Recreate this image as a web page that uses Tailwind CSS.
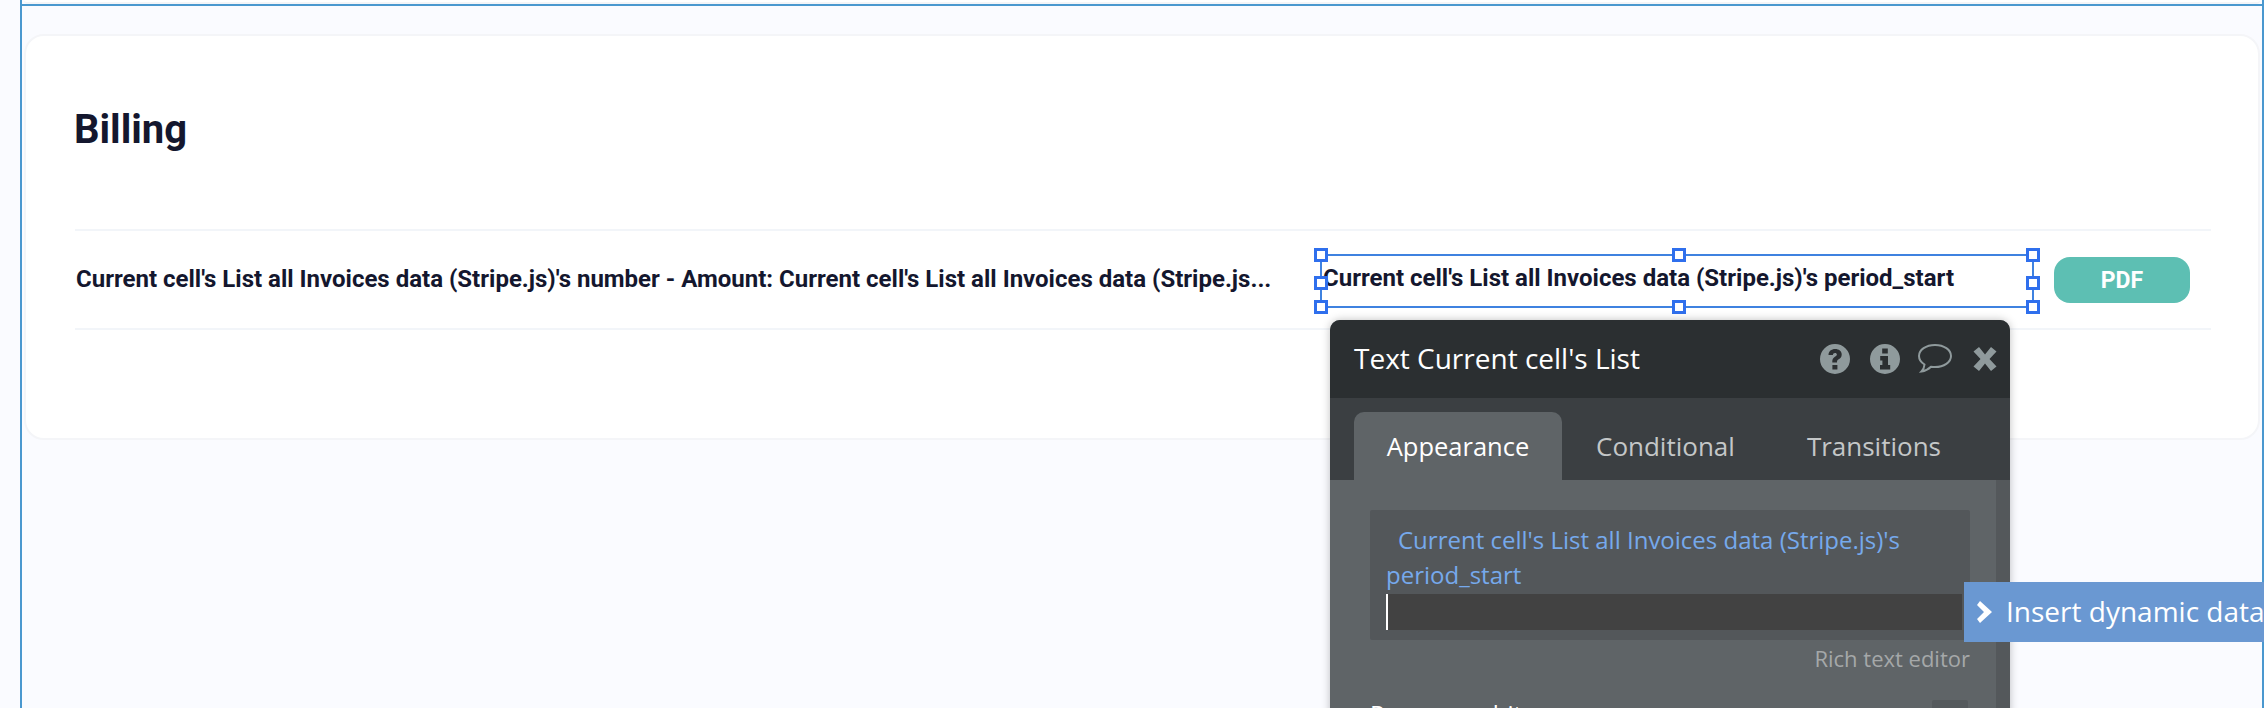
<!DOCTYPE html>
<html lang="en">
  <head>
    <meta charset="UTF-8" />
    <title>Billing</title>
    <script src="https://cdn.jsdelivr.net/npm/@tailwindcss/browser@4"></script>
  </head>
  <body class="bg-[#fafbff] overflow-hidden">
    <div class="relative w-[2264px] h-[708px] overflow-hidden font-['Roboto',sans-serif]">
      <!-- Page frame -->
      <div class="ml-[20px] h-[708px] border-l-2 border-r-2 border-[#4a98cf]">
        <!-- bottom of the card above -->
        <div class="h-[4px] ml-[2px] mr-[2px] bg-white border-b-2 border-[#f4f5f8] rounded-b-[20px]"></div>
        <div class="border-t-2 border-[#4a98cf]">
          <!-- Billing card -->
          <div class="mt-[28px] ml-[2px] mr-[2px] h-[406px] bg-white border-2 border-[#f4f5f8] rounded-[20px] pl-[49px] pr-[47px]">
            <h1 class="-ml-[1px] pt-[70px] h-[193px] text-[40px] leading-[48px] font-bold text-[#14172e]">Billing</h1>
            <div class="h-[101px] border-y-2 border-[#f2f5f9] flex items-center">
              <div class="w-[1200px] pl-[1px] pb-[2px] text-[24px] leading-[30px] font-bold text-[#14172e] truncate">Current cell's List all Invoices data (Stripe.js)'s number - Amount: Current cell's List all Invoices data (Stripe.js...</div>
              <div class="w-[48px] shrink-0"></div>
              <div class="w-[710px] shrink-0 pb-[4px] text-[24px] leading-[30px] font-bold text-[#14172e] whitespace-nowrap">Current cell's List all Invoices data (Stripe.js)'s period_start</div>
              <button class="ml-[21px] w-[136px] h-[46px] pt-[3px] rounded-[16px] bg-[#5dbfb3] text-white text-[23px] font-bold">PDF</button>
            </div>
          </div>
        </div>
      </div>

      <!-- Selection box -->
      <div class="absolute left-[1320px] top-[254px] w-[714px] h-[54px] border-2 border-[#3f82e0]">
        <span class="absolute -left-[8px] -top-[8px] w-[14px] h-[14px] bg-white border-[3px] border-[#2f6fed]"></span>
        <span class="absolute left-[350px] -top-[8px] w-[14px] h-[14px] bg-white border-[3px] border-[#2f6fed]"></span>
        <span class="absolute -right-[8px] -top-[8px] w-[14px] h-[14px] bg-white border-[3px] border-[#2f6fed]"></span>
        <span class="absolute -left-[8px] top-[20px] w-[14px] h-[14px] bg-white border-[3px] border-[#2f6fed]"></span>
        <span class="absolute -right-[8px] top-[20px] w-[14px] h-[14px] bg-white border-[3px] border-[#2f6fed]"></span>
        <span class="absolute -left-[8px] -bottom-[8px] w-[14px] h-[14px] bg-white border-[3px] border-[#2f6fed]"></span>
        <span class="absolute left-[350px] -bottom-[8px] w-[14px] h-[14px] bg-white border-[3px] border-[#2f6fed]"></span>
        <span class="absolute -right-[8px] -bottom-[8px] w-[14px] h-[14px] bg-white border-[3px] border-[#2f6fed]"></span>
      </div>

      <!-- Property editor -->
      <div class="absolute left-[1330px] top-[320px] w-[680px] h-[420px] rounded-t-[10px] overflow-hidden bg-[#5f6467] shadow-[0_0_8px_rgba(0,0,0,0.25)] font-['Open_Sans',sans-serif]">
        <div class="h-[78px] bg-[#2b2f31] flex items-center pl-[24px] pr-[13px] text-white">
          <span class="text-[28px] leading-[40px] pb-[2px]">Text Current cell's List</span>
          <div class="ml-auto flex items-center text-[#8f9a9c]">
            <svg class="w-[32px] h-[32px]" viewBox="0 0 32 32" fill="currentColor"><path fill-rule="evenodd" d="M16 1a15 15 0 1 0 0 30 15 15 0 0 0 0-30zm-2.600 21h5v4.500h-5zM9.500 12c0-3.800 2.900-6 6.700-6 3.700 0 6.500 2.100 6.500 5.400 0 2.500-1.300 3.700-3 4.800-1.100.7-1.700 1.300-1.700 2.800v.5h-4.700v-.9c0-2.500.8-3.700 2.600-4.900 1.200-.8 2-1.300 2-2.200 0-1-.8-1.600-1.900-1.600-1.300 0-2.100.8-2.100 2.100z"/></svg>
            <svg class="ml-[18px] w-[32px] h-[32px]" viewBox="0 0 32 32" fill="currentColor"><path fill-rule="evenodd" d="M16 1a15 15 0 1 0 0 30 15 15 0 0 0 0-30zm-2.800 4.500h5.600v5h-5.600zm-2 7.500h7.800v9h2.200v4.500H11v-4.500h2.400v-4.500h-2.200z"/></svg>
            <svg class="ml-[16px] w-[36px] h-[32px]" viewBox="0 0 36 32" fill="none" stroke="currentColor" stroke-width="2"><path d="M18 2C9 2 2 6.800 2 13c0 3.600 2.400 6.600 5.500 8.500-.2 2.600-1 4.900-3 7 3.800-.5 7-2.300 9.500-4.700 1.300.2 2.600.3 4 .3 9 0 16-4.900 16-11.100S27 2 18 2z"/></svg>
            <svg class="ml-[20px] w-[24px] h-[26px]" viewBox="0 0 24 26" fill="currentColor"><path d="M6 1l6 7.500L18 1l5.500 4.500L16.500 13l7 7.500L18 25l-6-7.500L6 25l-5.500-4.500 7-7.500-7-7.500z"/></svg>
          </div>
        </div>
        <div class="h-[82px] bg-[#3b3f42] pl-[24px] flex items-end text-[26px]">
          <div class="w-[208px] h-[68px] bg-[#5f6467] rounded-t-[10px] text-white flex items-center justify-center text-[25.5px]">Appearance</div>
          <div class="ml-[34px] h-[68px] flex items-center text-[#c4c7c8]">Conditional</div>
          <div class="ml-[72px] h-[68px] flex items-center text-[#c4c7c8]">Transitions</div>
        </div>
        <div class="relative h-[260px] pt-[30px] pl-[40px]">
          <div class="absolute right-0 top-0 bottom-0 w-[14px] bg-[#54585b]"></div>
          <div class="w-[600px] h-[130px] rounded-[2px] bg-[#53575a] pt-[12px] pl-[16px] pr-[8px] text-[24px] leading-[36px] text-[#76a9ec]">
            <div class="pl-[12px]">Current cell's List all Invoices data (Stripe.js)'s</div>
            <div class="-mt-[1px] mb-[1px]">period_start</div>
            <div class="w-[576px] h-[36px] bg-[#424242] border-l-2 border-white"></div>
          </div>
          <div class="w-[600px] mt-[3px] text-right text-[22px] leading-[30px] text-[#a5a8a9]">Rich text editor</div>
          <div class="mt-[27px] w-[598px] flex items-start text-white text-[24px] leading-[36px]">
            <span class="-mt-[4px]">Preserve whitespace</span>
            <span class="ml-auto w-[36px] h-[40px] rounded-[2px] bg-[#555a5d]"></span>
          </div>
        </div>
      </div>

      <!-- Insert dynamic data -->
      <div class="absolute left-[1964px] top-[582px] w-[300px] h-[60px] bg-[#6a98d2] flex items-center pl-[13px] text-white text-[28px] font-['Open_Sans',sans-serif] whitespace-nowrap overflow-hidden">
        <svg class="w-[16px] h-[22px] mr-[13px] shrink-0" viewBox="0 0 16 22" fill="currentColor"><path d="M3 0l12 11L3 22l-3-4 7-7-7-7z"/></svg>
        <span class="pb-[2px]">Insert dynamic data</span>
      </div>
    </div>
  </body>
</html>
